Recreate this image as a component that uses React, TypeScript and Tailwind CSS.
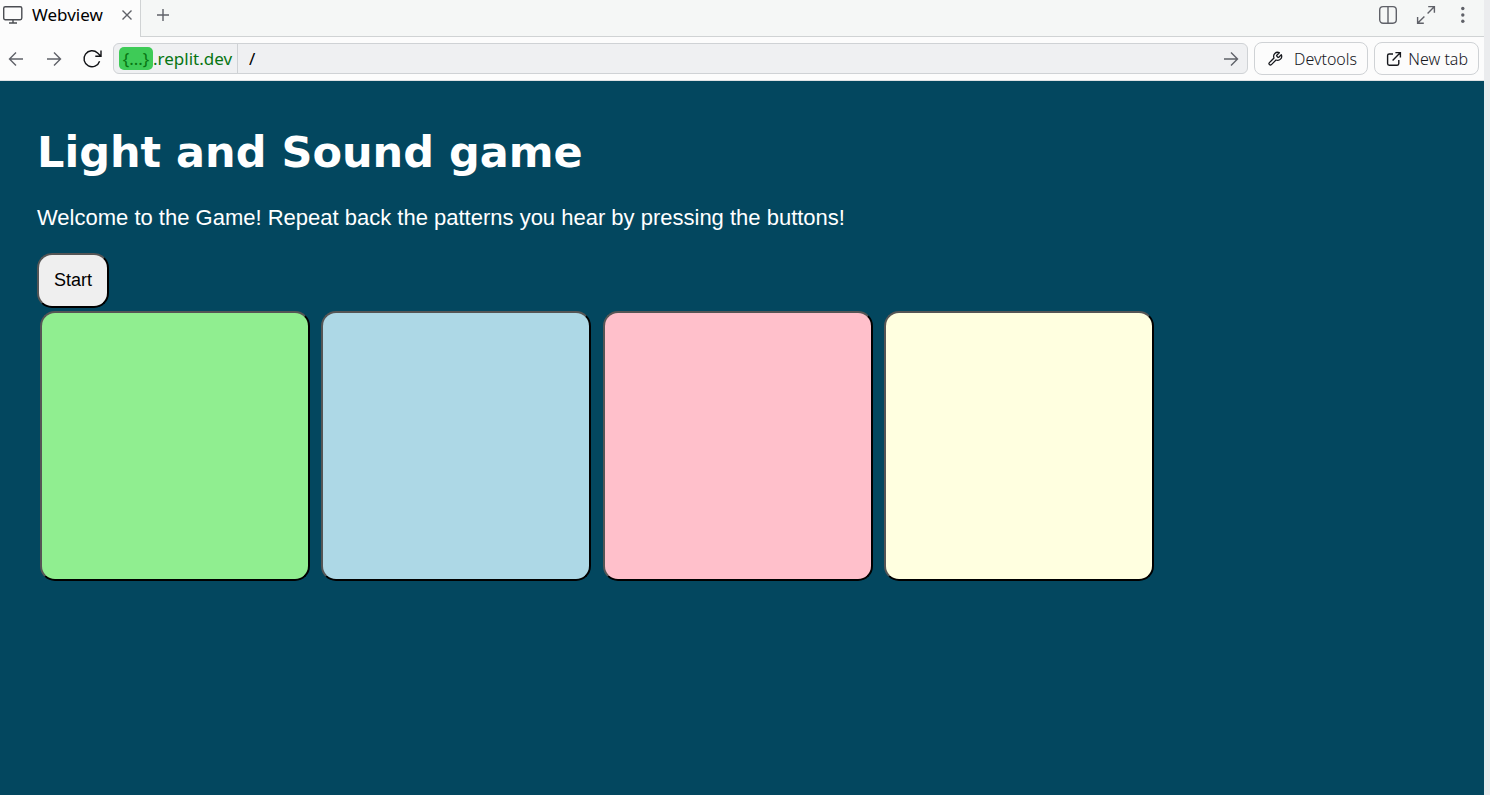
import { useState } from "react";
import type { ReactNode } from "react";

function Icon({ className, children, viewBox = "0 0 20 20" }: { className: string; children: ReactNode; viewBox?: string }) {
  return (
    <svg
      className={className}
      viewBox={viewBox}
      fill="none"
      stroke="currentColor"
      strokeWidth="1.4"
      aria-hidden="true"
    >
      {children}
    </svg>
  );
}

function TabBar() {
  return (
    <header className="flex h-[37px] border-b border-[#d0d3d4] bg-[#f5f7f6] text-[#5f6168]">
      <div className="-mb-px flex w-[141px] items-center border-r border-[#d0d3d4] bg-[#fcfcfc] pb-[7px] pl-[3px]">
        <Icon className="h-5 w-5 shrink-0 text-[#4b4d52]">
          <rect x="0.7" y="1.7" width="18.1" height="13" rx="1.6" />
          <path d="M10 15v3M6 18h8" />
        </Icon>
        <span className="ml-[9px] text-[17px] leading-5 text-black">Webview</span>
        <button type="button" aria-label="Close tab" className="ml-auto mr-[7px]">
          <Icon className="h-3 w-3" viewBox="0 0 12 12">
            <path d="M1.5 1.5l9 9M10.5 1.5l-9 9" />
          </Icon>
        </button>
      </div>
      <button type="button" aria-label="New pane" className="ml-4 mb-[7px]">
        <Icon className="h-3 w-3" viewBox="0 0 12 12">
          <path d="M0 6h12M6 0v12" />
        </Icon>
      </button>
      <div className="mb-[7px] ml-auto mr-[10px] flex items-center gap-[18px]">
        <button type="button" aria-label="Split pane">
          <Icon className="h-5 w-5">
            <rect x="1.7" y="1.6" width="16.6" height="16.6" rx="3.4" />
            <path d="M10 1.6v16.6" />
          </Icon>
        </button>
        <button type="button" aria-label="Maximize">
          <Icon className="h-5 w-5">
            <path d="M12.2 1.6h6.2v6.2M18.2 1.8L11.6 8.4M7.8 18.3H1.6v-6.2M1.8 18.1l6.6-6.6" />
          </Icon>
        </button>
        <button type="button" aria-label="More options">
          <Icon className="h-5 w-5">
            <g fill="currentColor" stroke="none">
              <circle cx="8.8" cy="3.5" r="1.7" />
              <circle cx="8.8" cy="10" r="1.7" />
              <circle cx="8.8" cy="16.2" r="1.7" />
            </g>
          </Icon>
        </button>
      </div>
    </header>
  );
}

function AddressBar() {
  return (
    <nav className="flex h-11 items-center border-b border-[#dfe2e4] bg-[#fcfcfc] pr-[5px] pl-[6px] text-[#5f6168]">
      <div className="flex items-center gap-[18px]">
        <button type="button" aria-label="Back">
          <Icon className="h-5 w-5">
            <path d="M17 10H3.5M10 3.5L3.5 10l6.5 6.5" />
          </Icon>
        </button>
        <button type="button" aria-label="Forward">
          <Icon className="h-5 w-5">
            <path d="M3 10h13.5M10 3.5l6.5 6.5-6.5 6.5" />
          </Icon>
        </button>
        <button type="button" aria-label="Reload" className="text-[#111216]">
          <Icon className="h-5 w-5">
            <path d="M17.6 12.2a8 8 0 1 1-2-8.2L19 7.2M19 1.5v5.7h-5.7" />
          </Icon>
        </button>
      </div>
      <div className="ml-[11px] flex h-[31px] min-w-0 flex-1 items-center rounded-[6px] border border-[#cfd2d5] bg-[#eff0f2] text-[17px]">
        <div className="flex h-full items-center border-r border-[#cfd2d5] px-[5px] text-[#077512]">
          <span className="flex h-[23px] w-[34px] items-center justify-center rounded-[5px] bg-[#3ecb57]">{"{...}"}</span>
          <span>.replit.dev</span>
        </div>
        <input
          aria-label="Path"
          defaultValue="/"
          className="h-full min-w-0 flex-1 bg-transparent px-[11px] text-black outline-none"
        />
        <button type="button" aria-label="Go" className="mr-[6px]">
          <Icon className="h-5 w-5">
            <path d="M3 10h13.5M10 3.5l6.5 6.5-6.5 6.5" />
          </Icon>
        </button>
      </div>
      <button
        type="button"
        className="ml-[6px] flex h-[33px] w-[114px] items-center justify-between rounded-[8px] border border-[#cfd2d5] pr-[10px] pl-3 text-[16px] font-light text-[#15171c]"
      >
        <Icon className="h-4 w-4" viewBox="0 0 24 24">
          <path
            strokeWidth="1.9"
            strokeLinejoin="round"
            d="M14.7 6.3a1 1 0 0 0 0 1.4l1.6 1.6a1 1 0 0 0 1.4 0l3.77-3.77a6 6 0 0 1-7.94 7.94l-6.91 6.91a2.12 2.12 0 0 1-3-3l6.91-6.91a6 6 0 0 1 7.94-7.94z"
          />
        </Icon>
        Devtools
      </button>
      <button
        type="button"
        className="ml-[6px] flex h-[33px] w-[105px] items-center justify-between rounded-[8px] border border-[#cfd2d5] pr-[10px] pl-[11px] text-[16px] font-light text-[#15171c]"
      >
        <Icon className="h-4 w-4" viewBox="0 0 16 16">
          <path d="M7 3H3.2Q1.6 3 1.6 4.6v8Q1.6 14.2 3.2 14.2h8q1.6 0 1.6-1.6V9M9.4 1.6h5v5M14.2 1.8L6.6 9.4" />
        </Icon>
        New tab
      </button>
    </nav>
  );
}

const pads = [
  { name: "Green", fill: "bg-[#90ee90]" },
  { name: "Blue", fill: "bg-[#add8e6]" },
  { name: "Pink", fill: "bg-[#ffc0cb]" },
  { name: "Yellow", fill: "bg-[#ffffe0]" },
];

const bevel = "rounded-[15px] border-2 border-t-[#555555] border-l-[#555555] border-r-black border-b-black";

function Game() {
  const [playing, setPlaying] = useState(false);
  return (
    <main className="flex-1 bg-[#03475f] px-[37px] pt-[43px] font-['Liberation_Sans',Arial,sans-serif] text-white">
      <h1 className="font-['DejaVu_Sans',Verdana,sans-serif] text-[43px] leading-[56px] font-bold">
        Light and Sound game
      </h1>
      <p className="mt-6 text-[22px] leading-[28px]">
        Welcome to the Game! Repeat back the patterns you hear by pressing the buttons!
      </p>
      <button
        type="button"
        aria-pressed={playing}
        onClick={() => setPlaying(!playing)}
        className={`mt-[21px] block h-[55px] px-[15px] bg-[#efefef] text-[18px] text-black ${bevel}`}
      >
        Start
      </button>
      <div className="mt-[3px] ml-[3px] flex max-w-[1114px] flex-wrap justify-between">
        {pads.map((pad) => (
          <button key={pad.name} type="button" aria-label={pad.name} className={`size-[270px] ${pad.fill} ${bevel}`} />
        ))}
      </div>
    </main>
  );
}

export default function App() {
  return (
    <div className="flex min-h-screen flex-col border-r-[6px] border-[#ebecee] bg-[#fcfcfc] font-['Noto_Sans',sans-serif]">
      <TabBar />
      <AddressBar />
      <Game />
    </div>
  );
}
